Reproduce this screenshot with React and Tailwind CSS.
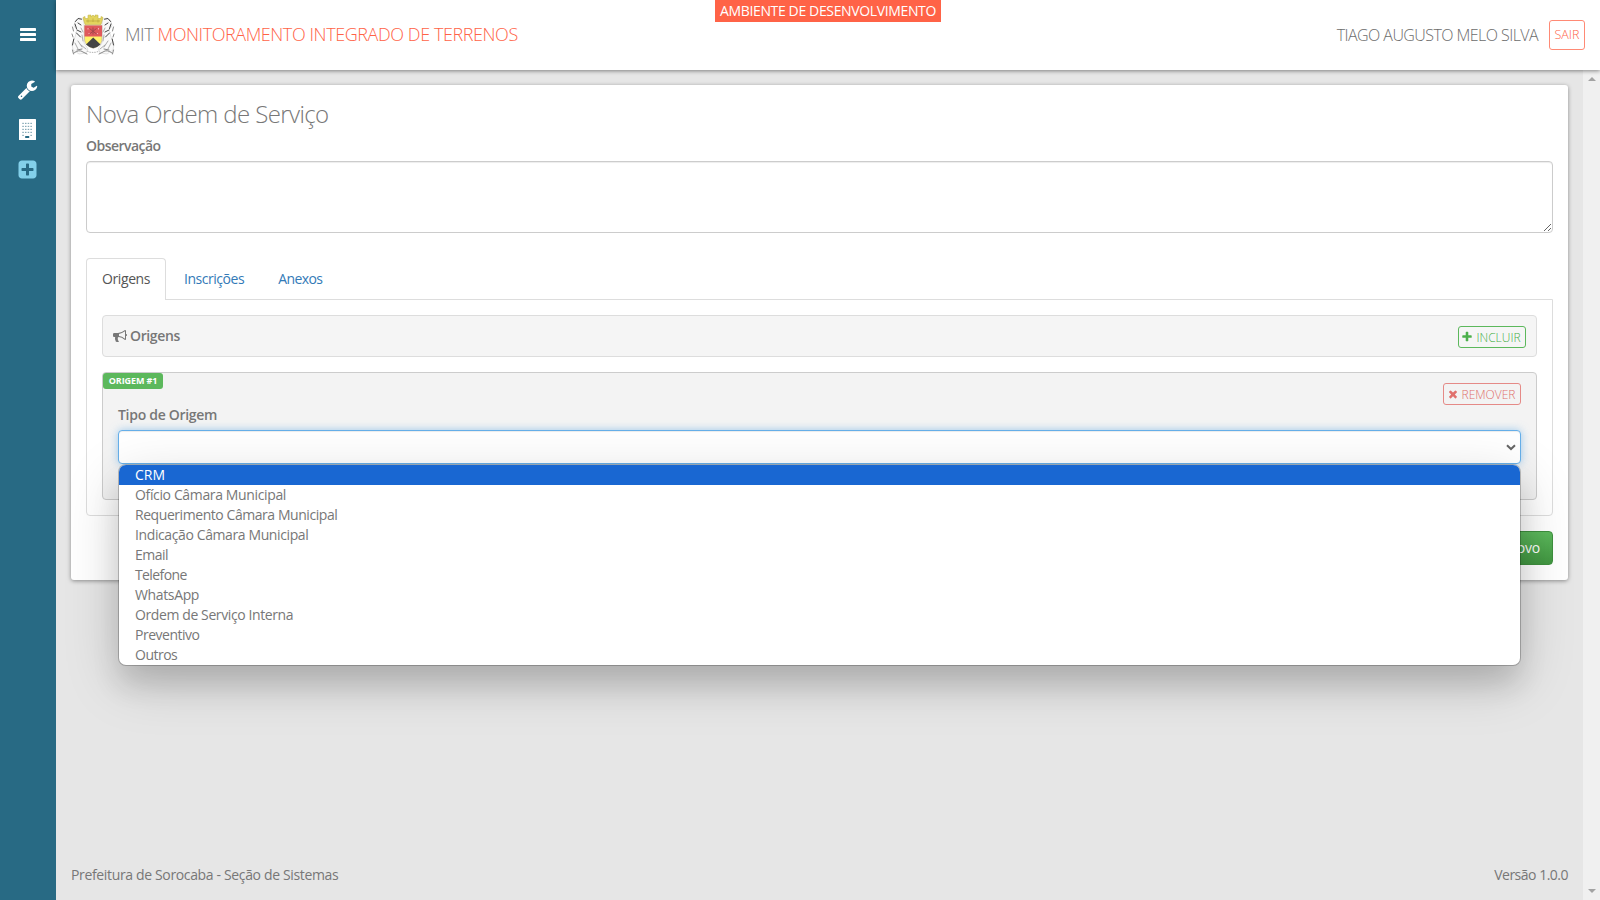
import React from 'react';

function Icon({ path, className }) {
  return (
    <svg viewBox="0 0 1792 1792" className={className} fill="currentColor" aria-hidden="true">
      <path d={path} />
    </svg>
  );
}

const WRENCH =
  'M448 1472q0-26-19-45t-45-19-45 19-19 45 19 45 45 19 45-19 19-45zm644-420l-682 682q-37 37-90 37-52 0-91-37l-106-108q-38-36-38-90 0-53 38-91l681-681q39 98 114.5 173.5t173.5 114.5zm634-435q0 39-23 106-47 134-164.5 217.5t-258.5 83.5q-185 0-316.5-131.5t-131.5-316.5 131.5-316.5 316.5-131.5q58 0 121.5 16.5t107.5 46.5q16 11 16 28t-16 28l-293 169v224l193 107q5-3 79-48.5t135.5-81 70.5-35.5q15 0 23.5 10t8.5 25z';
const PLUS_SQUARE =
  'M1408 960v-128q0-26-19-45t-45-19h-320v-320q0-26-19-45t-45-19h-128q-26 0-45 19t-19 45v320h-320q-26 0-45 19t-19 45v128q0 26 19 45t45 19h320v320q0 26 19 45t45 19h128q26 0 45-19t19-45v-320h320q26 0 45-19t19-45zm256-544v960q0 119-84.5 203.5t-203.5 84.5h-960q-119 0-203.5-84.5t-84.5-203.5v-960q0-119 84.5-203.5t203.5-84.5h960q119 0 203.5 84.5t84.5 203.5z';
const BULLHORN =
  'M1664 640q53 0 90.5 37.5t37.5 90.5-37.5 90.5-90.5 37.5v384q0 52-38 90t-90 38q-417-347-812-380-58 19-91 66t-31 100.5 40 92.5q-20 33-23 65.5t6 58 33.5 55 48 50 61.5 50.5q-29 58-111.5 83t-168.5 11.5-132-55.5q-7-23-29.5-87.5t-32-94.5-23-89-15-101 3.5-98.5 22-110.5h-122q-66 0-113-47t-47-113v-192q0-66 47-113t113-47h480q435 0 896-384 52 0 90 38t38 90v384zm-128 604v-954q-394 302-768 343v270q377 42 768 341z';
const PLUS =
  'M1600 736v192q0 40-28 68t-68 28h-416v416q0 40-28 68t-68 28h-192q-40 0-68-28t-28-68v-416h-416q-40 0-68-28t-28-68v-192q0-40 28-68t68-28h416v-416q0-40 28-68t68-28h192q40 0 68 28t28 68v416h416q40 0 68 28t28 68z';
const TIMES =
  'M1490 1322q0 40-28 68l-136 136q-28 28-68 28t-68-28l-294-294-294 294q-28 28-68 28t-68-28l-136-136q-28-28-28-68t28-68l294-294-294-294q-28-28-28-68t28-68l136-136q28-28 68-28t68 28l294 294 294-294q28-28 68-28t68 28l136 136q28 28 28 68t-28 68l-294 294 294 294q28 28 28 68z';

function Sidebar() {
  return (
    <nav className="flex w-14 shrink-0 flex-col items-center bg-[#286a84] pt-7 text-white">
      <svg viewBox="0 0 16 13" className="h-[13px] w-4" fill="currentColor">
        <rect width="16" height="3" rx="0.4" />
        <rect y="5" width="16" height="3" rx="0.4" />
        <rect y="10" width="16" height="3" rx="0.4" />
      </svg>
      <Icon path={WRENCH} className="mt-[38px] mr-px size-[21px]" />
      <svg viewBox="0 0 17 21" className="mt-[19px] mr-px h-[21px] w-[17px]">
        <rect width="17" height="21" rx="0.6" fill="#fff" />
        {[4, 7, 10, 13, 16].map((y) =>
          [3.3, 6, 8.7, 11.4].map((x) =>
            y === 16 && x > 3.3 && x < 11.4 ? null : (
              <rect key={`${x}-${y}`} x={x} y={y - 0.2} width="1.5" height="1.2" fill="#86a9b6" />
            ),
          ),
        )}
        <rect x="6.2" y="17" width="4" height="2" fill="#286a84" />
      </svg>
      <Icon path={PLUS_SQUARE} className="mt-[19px] mr-px size-[21px] text-[#83d0ea]" />
    </nav>
  );
}

function Crest() {
  const lion = (
    <g fill="none" strokeLinecap="round">
      <path d="M12 5 8 4 4 7l-1 5 3 4-2 7-3 7 1 6 6 4 7-1 2-4-4-6V11z" fill="#f9f9f9" stroke="#d2d2d2" strokeWidth=".6" />
      <path d="M10.500 5.200 7 4.500 4.500 7.500M4 10l1.500 4.500M7 9l3 2M6 16l4 2M5.500 19l4 4M2.800 25l-1.300 6" stroke="#444" strokeWidth="1" />
      <path d="M10 14l2 4M11 21l1 6M7 27l4 6M4 29l3 6M10 31l5 4" stroke="#999" strokeWidth=".8" />
      <path d="M1.500 36l1 4M3 39q5-4 9-1l4 2M6 36l5-1M1.500 13l1 4M1 20l1 3" stroke="#888" strokeWidth="1" />
    </g>
  );
  return (
    <svg viewBox="0 0 44 42" className="h-[42px] w-11 shrink-0">
      {lion}
      <g transform="translate(44 0) scale(-1 1)">{lion}</g>
      <path d="M12 3.500l2-1v2h3V1.200L20 1v2l2-2 2 2V1l3 .2V4.500h3v-2l2 1-2 7H14z" fill="#e3d45d" stroke="#c5b548" strokeWidth=".6" />
      <path d="M15 7h14M17 5.500v3M22 4.500V8M27 5.500v3" stroke="#b9a83d" strokeWidth=".7" />
      <path d="M13.500 11.500h17.500V25c0 5-4 8-8.750 9.200C17.500 33 13.500 30 13.500 25z" fill="#fff26b" stroke="#b7aaa0" strokeWidth=".6" />
      <path d="M13.500 11.500h17.500V22.500H13.500z" fill="#e0595c" />
      <path d="M18.500 14.500l7 5.500M25.500 14.500l-7 5.500M22 13.500v7" stroke="#a2474c" strokeWidth="1" />
      <path d="M17 14v1.500M27.500 14v1.500M17.500 19.500h1M26 19.500h1" stroke="#f5b3b3" strokeWidth="1" />
      <path d="M22.200 23.500 29.500 30.500Q26.500 33.400 22.200 34.200 18 33.400 15 30.500z" fill="#454545" />
      <path d="M16 37q6 3 12.500 0" stroke="#bbb" strokeWidth="1.200" fill="none" strokeDasharray="1.500 1" />
    </svg>
  );
}

function Header() {
  return (
    <header className="relative z-10 flex h-[70px] shrink-0 items-center bg-white pr-[15px] pl-[15px] shadow-[0_1px_4px_rgba(0,0,0,0.45)]">
      <Crest />
      <h1 className="ml-[10px] pb-[2px] text-[18px] leading-6 font-light tracking-[-0.42px] whitespace-nowrap text-[#777]">
        MIT <span className="text-[#ff6347]">MONITORAMENTO INTEGRADO DE TERRENOS</span>
      </h1>
      <div className="absolute top-0 left-[659px] h-[22px] w-[226px] bg-[#ff6347] pt-px text-center text-sm leading-5 tracking-[-0.36px] whitespace-nowrap text-white">
        AMBIENTE DE DESENVOLVIMENTO
      </div>
      <div className="ml-auto flex items-center gap-[11px]">
        <span className="pb-px text-base leading-6 font-light tracking-[-0.56px] whitespace-nowrap text-[#6c6c6c]">TIAGO AUGUSTO MELO SILVA</span>
        <button className="flex h-[30px] w-9 items-center justify-center rounded-[3px] border border-[#ff8a75] pt-px text-[12.5px] leading-none font-light text-[#ff6347]">
          SAIR
        </button>
      </div>
    </header>
  );
}

const OPTIONS = [
  ['CRM', 'tracking-normal'],
  ['Ofício Câmara Municipal', 'tracking-[-0.36px]'],
  ['Requerimento Câmara Municipal', 'tracking-[-0.44px]'],
  ['Indicação Câmara Municipal', 'tracking-[-0.39px]'],
  ['Email', 'tracking-[-0.5px]'],
  ['Telefone', 'tracking-[-0.6px]'],
  ['WhatsApp', 'tracking-[-0.36px]'],
  ['Ordem de Serviço Interna', 'tracking-[-0.4px]'],
  ['Preventivo', 'tracking-[-0.49px]'],
  ['Outros', 'tracking-[-0.5px]'],
];

function TipoSelect() {
  return (
    <div className="relative mt-[5px]">
      <div className="flex h-[34px] items-center justify-end rounded border border-[#66afe9] bg-white pr-1 shadow-[inset_0_1px_1px_rgba(0,0,0,0.075),0_0_8px_rgba(102,175,233,0.6)]">
        <svg viewBox="0 0 10 7" className="h-[7px] w-[10px]" fill="none" stroke="#666" strokeWidth="2">
          <path d="M1 1.200 5 5l4-3.800" />
        </svg>
      </div>
      <ul className="absolute top-[35px] right-px left-px z-20 overflow-hidden rounded-[7px] bg-white text-sm leading-5 shadow-[0_0_0_1px_rgba(0,0,0,0.22),0_20px_28px_rgba(0,0,0,0.12),0_16px_56px_rgba(0,0,0,0.18)]">
        {OPTIONS.map(([label, tracking], i) => (
          <li key={label} className={`h-5 pl-4 ${tracking} ${i === 0 ? 'bg-[#1967d2] text-white' : 'text-[#777]'}`}>
            {label}
          </li>
        ))}
      </ul>
    </div>
  );
}

function Tabs() {
  return (
    <div className="relative z-[1] -mb-px flex h-[42px] text-sm leading-5 text-[#337ab7]">
      <a className="w-20 rounded-t border border-b-0 border-[#ddd] bg-white pt-[10px] pl-[15px] tracking-[-0.4px] text-[#555]">Origens</a>
      <a className="ml-[18px] pt-[11px] tracking-[-0.46px]">Inscrições</a>
      <a className="ml-[34px] pt-[11px] tracking-[-0.6px]">Anexos</a>
    </div>
  );
}

function Card() {
  return (
    <section className="flex h-[495px] flex-col rounded-[3px] bg-white px-[15px] pt-[15px] shadow-[0_1px_4px_rgba(0,0,0,0.4)]">
      <h2 className="h-[30px] text-2xl leading-[28px] font-light tracking-[-0.6px] text-[#777]">Nova Ordem de Serviço</h2>
      <label className="mt-[6px] text-sm leading-5 font-semibold tracking-[-0.54px]">Observação</label>
      <textarea className="mt-[5px] h-[72px] shrink-0 resize-y rounded border border-[#ccc] bg-white shadow-[inset_0_1px_1px_rgba(0,0,0,0.075)]" />
      <div className="mt-[25px]">
        <Tabs />
        <div className="h-[217px] rounded-b border border-[#ddd] p-[15px]">
          <div className="flex h-[42px] items-center rounded border border-[#ddd] bg-[#f5f5f5] px-[10px]">
            <Icon path={BULLHORN} className="size-[14px]" />
            <span className="ml-[3px] text-sm leading-5 font-semibold tracking-[-0.38px]">Origens</span>
            <button className="mt-[2px] ml-auto flex h-[22px] w-[68px] items-center justify-center gap-[3px] rounded-[3px] border border-[#5cb85c] pr-[2px] text-xs leading-5 font-light text-[#4cb04c]">
              <Icon path={PLUS} className="size-3" />
              <span className="pt-px">INCLUIR</span>
            </button>
          </div>
          <div className="relative mt-[15px] h-32 rounded border border-[#ccc] bg-[#f3f3f3] px-[15px] pt-[10px]">
            <span className="absolute top-0 left-0 h-4 w-[60px] rounded-[3px] bg-[#5cb85c] text-center text-[9px] leading-4 font-bold tracking-[-0.1px] text-white">
              ORIGEM #1
            </span>
            <div className="flex justify-end">
              <button className="flex h-[22px] w-[78px] items-center justify-center gap-[3px] rounded-[3px] border border-[#e58a87] pr-[2px] text-xs leading-5 font-light text-[#e0716d]">
                <Icon path={TIMES} className="size-3" />
                <span className="pt-px">REMOVER</span>
              </button>
            </div>
            <label className="block text-sm leading-5 font-semibold tracking-[-0.3px]">Tipo de Origem</label>
            <TipoSelect />
          </div>
        </div>
        <div className="mt-[15px] flex justify-end">
          <button className="h-[34px] rounded border border-[#3e8f3e] bg-linear-to-b from-[#5cb85c] to-[#419641] px-3 text-sm leading-5 tracking-[-0.2px] text-white">
            Salvar e Novo
          </button>
        </div>
      </div>
    </section>
  );
}

export default function App() {
  return (
    <div className="flex h-[900px] w-[1600px] overflow-hidden bg-[#e6e6e6] text-[#777] [font-family:'Open_Sans',sans-serif]">
      <Sidebar />
      <div className="flex min-w-0 grow flex-col">
        <Header />
        <div className="flex min-h-0 grow">
          <main className="flex min-w-0 grow flex-col p-[15px]">
            <Card />
            <footer className="mt-auto flex h-5 justify-between text-sm leading-5">
              <span className="tracking-[-0.35px]">Prefeitura de Sorocaba - Seção de Sistemas</span>
              <span className="tracking-[-0.5px]">Versão 1.0.0</span>
            </footer>
          </main>
          <div className="flex w-[17px] shrink-0 flex-col items-center justify-between bg-[#f0f0f0] pt-[7px] pb-[7px]">
            <svg viewBox="0 0 8 4" className="h-1 w-2" fill="#a3a3a3"><path d="M0 4 4 0l4 4z" /></svg>
            <svg viewBox="0 0 8 4" className="h-1 w-2" fill="#a3a3a3"><path d="M0 0l4 4 4-4z" /></svg>
          </div>
        </div>
      </div>
    </div>
  );
}
